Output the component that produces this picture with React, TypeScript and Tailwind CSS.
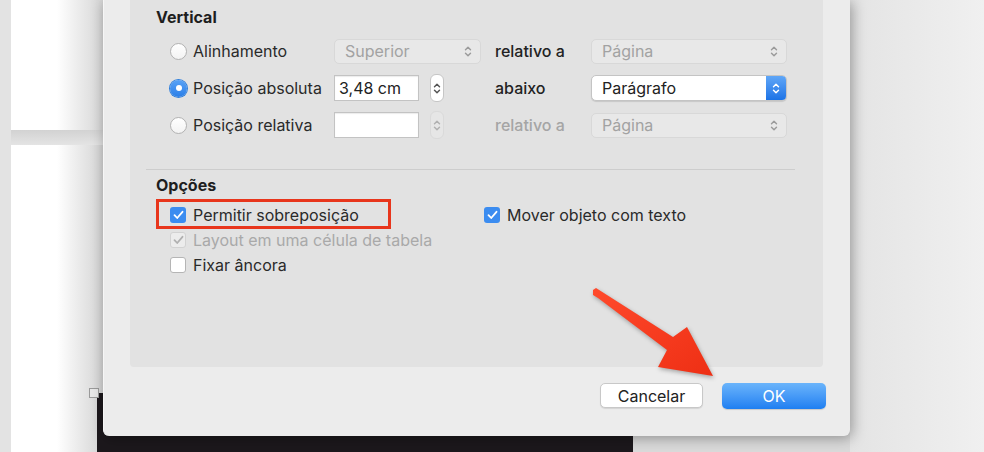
import React from 'react'

function UpDown({ className = '' }: { className?: string }) {
  return (
    <svg width="8" height="13" viewBox="0 0 8 13" fill="none" stroke="currentColor" strokeWidth="1.4" strokeLinecap="round" strokeLinejoin="round" className={className}>
      <path d="M1.5 4.8 4 2.2l2.5 2.6M1.5 8.2 4 10.8l2.5-2.6" />
    </svg>
  )
}

function Select({ value, width, disabled = false }: { value: string; width: string; disabled?: boolean }) {
  return (
    <div
      className={`flex h-[25px] items-center justify-between rounded-[5px] border pl-[10px] pr-[8px] ${width} ${
        disabled ? 'border-[#d8d8d8] bg-[#e8e8e8] text-[#a2a2a2]' : 'border-[#c9c9c9] bg-white text-[#2a2a2a]'
      }`}
    >
      <span>{value}</span>
      <UpDown className="text-[#9b9b9b]" />
    </div>
  )
}

function ActiveSelect({ value }: { value: string }) {
  return (
    <div className="flex h-[26px] w-[196px] items-stretch overflow-hidden rounded-[5px] border border-[#c4c4c4] bg-white shadow-[0_1px_1px_rgba(0,0,0,0.12)]">
      <span className="flex flex-1 items-center pl-[10px] text-[#222]">{value}</span>
      <span className="flex w-[20px] items-center justify-center bg-gradient-to-b from-[#5fa6f7] to-[#1b73e6] text-white">
        <UpDown />
      </span>
    </div>
  )
}

function Stepper({ disabled = false }: { disabled?: boolean }) {
  return (
    <div
      className={`flex h-[28px] w-[14px] flex-col items-center justify-center rounded-[6px] border ${
        disabled ? 'border-[#dadada] bg-[#e6e6e6] text-[#b0b0b0]' : 'border-[#c6c6c6] bg-white text-[#555]'
      }`}
    >
      <UpDown />
    </div>
  )
}

function Radio({ checked = false }: { checked?: boolean }) {
  if (checked) {
    return (
      <span className="flex h-[17px] w-[17px] items-center justify-center rounded-full bg-gradient-to-b from-[#58a2f6] to-[#2a7fe8] shadow-[0_0_0_1px_#2f7fdc]">
        <span className="h-[6px] w-[6px] rounded-full bg-white" />
      </span>
    )
  }
  return <span className="h-[17px] w-[17px] rounded-full border border-[#b2b2b2] bg-gradient-to-b from-white to-[#f3f3f3]" />
}

function Check({ state }: { state: 'on' | 'off' | 'dim' }) {
  if (state === 'off') return <span className="h-[16px] w-[16px] rounded-[3px] border border-[#b5b5b5] bg-white" />
  const on = state === 'on'
  return (
    <span
      className={`flex h-[16px] w-[16px] items-center justify-center rounded-[3px] ${
        on ? 'bg-[#3b8cf0] text-white' : 'border border-[#d2d2d2] bg-[#ececec] text-[#b0b0b0]'
      }`}
    >
      <svg width="11" height="10" viewBox="0 0 11 10" fill="none" stroke="currentColor" strokeWidth="1.8" strokeLinecap="round" strokeLinejoin="round">
        <path d="M1.5 5.2 4.2 8 9.5 1.8" />
      </svg>
    </span>
  )
}

function Field({ value = '' }: { value?: string }) {
  return (
    <div className="flex h-[26px] w-[85px] items-center border border-[#c3c3c3] bg-white pl-[4px] text-[#222] shadow-[inset_0_1px_1px_rgba(0,0,0,0.08)]">
      {value}
    </div>
  )
}

export default function App() {
  return (
    <div className="relative h-[452px] w-[984px] overflow-hidden bg-[#e3e3e3] font-['Inter','Liberation_Sans',sans-serif] text-[16px] text-[#2a2a2a]">
      {/* document pages behind the dialog */}
      <div className="absolute left-[11px] top-0 h-[130px] w-[92px] bg-gradient-to-r from-white via-white to-[#d6d6d6]" />
      <div className="absolute left-[11px] top-[130px] h-[15px] w-[92px] bg-gradient-to-b from-[#d2d2d2] to-[#e4e4e4]" />
      <div className="absolute left-[11px] top-[145px] h-[307px] w-[92px] bg-gradient-to-r from-white via-white to-[#d4d4d4]" />
      <div className="absolute left-[97px] top-[393px] h-[59px] w-[536px] bg-[#1c181c]" />
      <div className="absolute left-[89px] top-[388px] h-[10px] w-[10px] border border-[#9a9a9a] bg-[#e8e8e8]" />
      <div className="absolute left-[633px] top-[420px] h-[32px] w-[220px] bg-[#dadada]" />
      <div className="absolute left-[850px] top-0 h-[452px] w-[134px] bg-gradient-to-r from-[#e4e4e4] to-[#f0f0f0]" />

      {/* dialog window */}
      <div className="absolute left-[103px] top-0 flex h-[436px] w-[747px] flex-col rounded-b-[6px] border-l border-[#f6f6f6] bg-[#ececec] shadow-[2px_2px_14px_rgba(0,0,0,0.35)]">
        <div className="mx-[26px] mr-[27px] flex h-[367px] flex-col rounded-b-[4px] bg-[#e2e2e2] px-[26px]">
          <h3 className="mt-[8px] h-[18px] text-[16px] font-bold leading-[18px] text-[#1e1e1e]">Vertical</h3>

          <div className="ml-[14px] mt-[12px] grid grid-cols-[164px_161px_96px_196px] grid-rows-[26px_26px_26px] items-center gap-y-[11px]">
            <label className="flex items-center gap-[6px]">
              <Radio />
              <span>Alinhamento</span>
            </label>
            <Select value="Superior" width="w-[147px]" disabled />
            <span className="font-medium text-[#222]">relativo a</span>
            <Select value="Página" width="w-[196px]" disabled />

            <label className="flex items-center gap-[6px]">
              <Radio checked />
              <span>Posição absoluta</span>
            </label>
            <div className="flex items-center gap-[11px]">
              <Field value="3,48 cm" />
              <Stepper />
            </div>
            <span className="font-medium text-[#222]">abaixo</span>
            <ActiveSelect value="Parágrafo" />

            <label className="flex items-center gap-[6px]">
              <Radio />
              <span>Posição relativa</span>
            </label>
            <div className="flex items-center gap-[11px]">
              <Field />
              <Stepper disabled />
            </div>
            <span className="font-medium text-[#a5a5a5]">relativo a</span>
            <Select value="Página" width="w-[196px]" disabled />
          </div>

          <div className="-ml-[10px] mr-[2px] mt-[31px] h-px bg-[#cdcdcd]" />

          <h3 className="mt-[6px] h-[18px] text-[16px] font-bold leading-[18px] text-[#1e1e1e]">Opções</h3>

          <div className="ml-[14px] mt-[8px] flex flex-col">
            <div className="relative grid h-[25px] grid-cols-[314px_1fr] items-center">
              <label className="flex items-center gap-[7px]">
                <Check state="on" />
                <span>Permitir sobreposição</span>
              </label>
              <label className="flex items-center gap-[7px]">
                <Check state="on" />
                <span>Mover objeto com texto</span>
              </label>
              <div className="absolute -left-[14px] -top-[3px] h-[30px] w-[235px] border-[3px] border-[#e8361c]" />
            </div>
            <label className="flex h-[25px] items-center gap-[7px] text-[#a9a9a9]">
              <Check state="dim" />
              <span>Layout em uma célula de tabela</span>
            </label>
            <label className="flex h-[25px] items-center gap-[7px]">
              <Check state="off" />
              <span>Fixar âncora</span>
            </label>
          </div>
        </div>

        <div className="mt-[16px] flex justify-end gap-[19px] pr-[24px]">
          <button className="h-[25px] w-[103px] rounded-[5px] border border-[#c8c8c8] bg-white text-[#222] shadow-[0_1px_1px_rgba(0,0,0,0.1)]">
            Cancelar
          </button>
          <button className="h-[26px] w-[104px] rounded-[5px] bg-gradient-to-b from-[#6ab4fb] to-[#1d7ff1] text-white shadow-[0_1px_1px_rgba(0,0,0,0.15)]">
            OK
          </button>
        </div>
      </div>

      {/* annotation arrow */}
      <svg className="absolute left-0 top-0" width="984" height="452" viewBox="0 0 984 452">
        <defs>
          <linearGradient id="arrowFill" x1="0" y1="0" x2="1" y2="1">
            <stop offset="0" stopColor="#ff4a2c" />
            <stop offset="1" stopColor="#ee2f14" />
          </linearGradient>
        </defs>
        <polygon
          points="593,290 596,288 673,337 687,327 713,376 658,367 667,350 598,298 593,295"
          fill="url(#arrowFill)"
          style={{ filter: 'drop-shadow(1px 2px 2px rgba(0,0,0,0.3))' }}
        />
      </svg>
    </div>
  )
}
